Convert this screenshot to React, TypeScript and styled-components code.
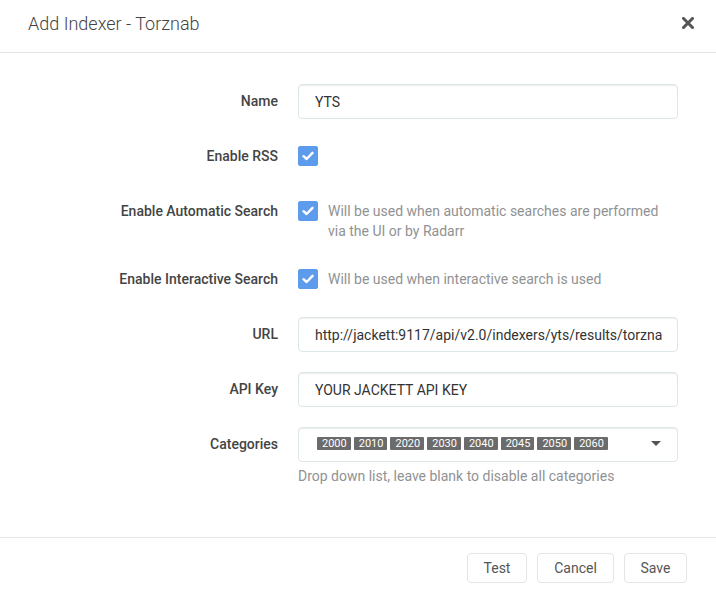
import React from "react";
import styled, { createGlobalStyle } from "styled-components";

const Global = createGlobalStyle`
  html, body { margin: 0; padding: 0; background: #fff; }
  body { font-family: Roboto, "Open Sans", sans-serif; font-size: 14px; color: #515253; }
  * { box-sizing: border-box; }
`;

const Modal = styled.div`
  width: 716px;
  height: 597px;
  display: flex;
  flex-direction: column;
  background: #fff;
`;

const Header = styled.div`
  height: 53px;
  border-bottom: 1px solid #e5e5e5;
  display: flex;
  align-items: center;
  justify-content: space-between;
  padding: 0 22px 0 28px;
`;

const Title = styled.h1`
  margin: 0;
  font-size: 18px;
  font-weight: 300;
  color: #444;
  line-height: 1;
  margin-top: -5px;
`;

const Close = styled.button`
  border: 0;
  background: transparent;
  padding: 0;
  width: 12px;
  height: 12px;
  display: flex;
  margin-top: -6px;
  cursor: pointer;
`;

const Body = styled.div`
  flex: 1;
  padding: 31px 38px 0 30px;
`;

const Row = styled.div`
  display: flex;
  align-items: flex-start;
  margin-bottom: 20px;
`;

const Label = styled.label`
  width: 248px;
  margin-right: 20px;
  text-align: right;
  font-weight: 500;
  line-height: 35px;
  color: #444;
`;

const Field = styled.div`
  width: 380px;
  display: flex;
  flex-direction: column;
`;

const TextInput = styled.input`
  width: 380px;
  height: 35px;
  border: 1px solid #dde6e9;
  border-radius: 4px;
  box-shadow: inset 0 1px 1px rgba(0, 0, 0, 0.075);
  padding: 0 15px 0 16px;
  font-family: Roboto, sans-serif;
  font-size: 14px;
  color: #333;
  background: #fff;
  outline: none;
`;

const CheckRow = styled.div<{ $tall?: boolean }>`
  display: flex;
  align-items: flex-start;
  padding-top: 7px;
  min-height: ${(p) => (p.$tall ? "48px" : "35px")};
`;

const Box = styled.span`
  flex: none;
  width: 20px;
  height: 20px;
  border-radius: 2px;
  background: #5d9cec;
  border: 1px solid #5d9cec;
  display: flex;
  align-items: center;
  justify-content: center;
`;

const Help = styled.div<{ $inline?: boolean }>`
  color: #909293;
  font-size: 14px;
  line-height: 20px;
  margin-left: ${(p) => (p.$inline ? "10px" : "0")};
  margin-top: ${(p) => (p.$inline ? "0" : "4px")};
  max-width: 340px;
`;

const Select = styled.div`
  width: 380px;
  height: 35px;
  border: 1px solid #dde6e9;
  border-radius: 4px;
  box-shadow: inset 0 1px 1px rgba(0, 0, 0, 0.075);
  display: flex;
  align-items: center;
  padding: 0 16px 0 18px;
`;

const Tags = styled.div`
  flex: 1;
  display: flex;
  gap: 3px;
  margin-top: -2px;
`;

const Tag = styled.span`
  background: #6b6b6b;
  color: #fff;
  font-size: 11px;
  line-height: 13px;
  padding: 0 4px 0 5px;
  border-radius: 1px;
`;

const Caret = styled.span`
  width: 0;
  height: 0;
  border-left: 5px solid transparent;
  border-right: 5px solid transparent;
  border-top: 5px solid #555;
  margin-top: -2px;
`;

const Footer = styled.div`
  border-top: 1px solid #e5e5e5;
  height: 60px;
  display: flex;
  justify-content: flex-end;
  align-items: flex-start;
  padding: 15px 29px 0 0;
  gap: 10px;
`;

const Button = styled.button<{ $w: number }>`
  width: ${(p) => p.$w}px;
  height: 30px;
  border: 1px solid #e5e5e5;
  border-radius: 4px;
  background: #fff;
  font-family: Roboto, sans-serif;
  font-size: 14px;
  color: #555;
  padding: 0;
  cursor: pointer;
`;

const Check = () => (
  <svg width="12" height="10" viewBox="0 0 12 10">
    <path d="M1.5 5.2 L4.6 8 L10.5 1.8" fill="none" stroke="#fff" strokeWidth="2.4" strokeLinecap="round" strokeLinejoin="round" />
  </svg>
);

const cats = ["2000", "2010", "2020", "2030", "2040", "2045", "2050", "2060"];

export default function App() {
  return (
    <>
      <Global />
      <Modal>
        <Header>
          <Title>Add Indexer - Torznab</Title>
          <Close aria-label="Close">
            <svg width="12" height="12" viewBox="0 0 12 12">
              <path d="M1.5 1.5 L10.5 10.5 M10.5 1.5 L1.5 10.5" stroke="#555" strokeWidth="3" strokeLinecap="square" />
            </svg>
          </Close>
        </Header>
        <Body>
          <Row>
            <Label>Name</Label>
            <Field>
              <TextInput readOnly value="YTS" />
            </Field>
          </Row>
          <Row>
            <Label>Enable RSS</Label>
            <Field>
              <CheckRow>
                <Box><Check /></Box>
              </CheckRow>
            </Field>
          </Row>
          <Row>
            <Label>Enable Automatic Search</Label>
            <Field>
              <CheckRow $tall>
                <Box><Check /></Box>
                <Help $inline>Will be used when automatic searches are performed via the UI or by Radarr</Help>
              </CheckRow>
            </Field>
          </Row>
          <Row>
            <Label>Enable Interactive Search</Label>
            <Field>
              <CheckRow>
                <Box><Check /></Box>
                <Help $inline>Will be used when interactive search is used</Help>
              </CheckRow>
            </Field>
          </Row>
          <Row>
            <Label>URL</Label>
            <Field>
              <TextInput readOnly value="http://jackett:9117/api/v2.0/indexers/yts/results/torznab" />
            </Field>
          </Row>
          <Row>
            <Label>API Key</Label>
            <Field>
              <TextInput readOnly value="YOUR JACKETT API KEY" />
            </Field>
          </Row>
          <Row>
            <Label>Categories</Label>
            <Field>
              <Select>
                <Tags>
                  {cats.map((c) => (
                    <Tag key={c}>{c}</Tag>
                  ))}
                </Tags>
                <Caret />
              </Select>
              <Help>Drop down list, leave blank to disable all categories</Help>
            </Field>
          </Row>
        </Body>
        <Footer>
          <Button $w={60}>Test</Button>
          <Button $w={77}>Cancel</Button>
          <Button $w={63}>Save</Button>
        </Footer>
      </Modal>
    </>
  );
}
